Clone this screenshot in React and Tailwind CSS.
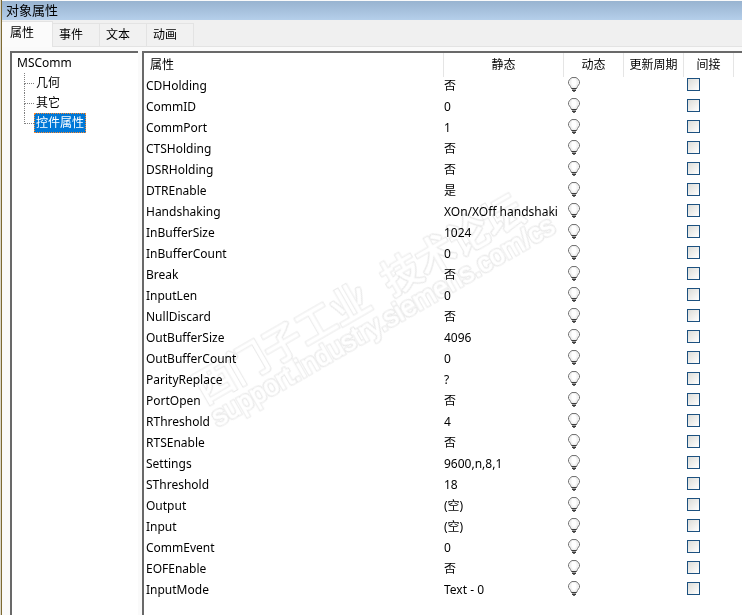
import { useState } from 'react';
import clsx from 'clsx';

const TABS = ['属性', '事件', '文本', '动画'];

const TREE_ITEMS = ['几何', '其它', '控件属性'];

const PROPERTIES = [
  ['CDHolding', '否'],
  ['CommID', '0'],
  ['CommPort', '1'],
  ['CTSHolding', '否'],
  ['DSRHolding', '否'],
  ['DTREnable', '是'],
  ['Handshaking', 'XOn/XOff handshaki'],
  ['InBufferSize', '1024'],
  ['InBufferCount', '0'],
  ['Break', '否'],
  ['InputLen', '0'],
  ['NullDiscard', '否'],
  ['OutBufferSize', '4096'],
  ['OutBufferCount', '0'],
  ['ParityReplace', '?'],
  ['PortOpen', '否'],
  ['RThreshold', '4'],
  ['RTSEnable', '否'],
  ['Settings', '9600,n,8,1'],
  ['SThreshold', '18'],
  ['Output', '(空)'],
  ['Input', '(空)'],
  ['CommEvent', '0'],
  ['EOFEnable', '否'],
  ['InputMode', 'Text - 0'],
];

const BulbIcon = () => (
  <svg className="block" width="12" height="15" viewBox="0 0 12 15" aria-hidden="true">
    <path
      d="M4 .5h4L10.500 2.500 11.500 4.500v2L9.500 9.500 8.500 11.500h-5L2.500 9.500.5 6.500v-2L1.500 2.500Z"
      fill="#f0f0f0"
      stroke="#757575"
      strokeWidth="1"
      strokeLinejoin="round"
    />
    <path d="M4 2h3L8.500 4v3L7 9.500H5L3.500 7V4Z" fill="#fff" />
    <path d="M3.500 11.500h5M4 13.500h4" stroke="#3c3c3c" strokeWidth="1" />
    <path d="M4 12.500h4" stroke="#a0a0a0" strokeWidth="1" />
    <path d="M5 14.500h2" stroke="#666" strokeWidth="1" />
  </svg>
);

const Tabs = ({ active, onChange }) => (
  <div role="tablist" className="flex items-end border-b border-[#e3e3e3] bg-[#f0f0f0] pt-px">
    {TABS.map((tab) => (
      <button
        key={tab}
        type="button"
        role="tab"
        aria-selected={tab === active}
        onClick={() => onChange(tab)}
        className={clsx(
          'shrink-0 border-r border-t border-[#e3e3e3] text-left',
          tab === active ? '-mb-px h-[26px] w-[51px] bg-[#fbfbfb] pb-1 pl-2' : 'h-[23px] w-[47px] bg-[#f1f1f1] pl-[6px]',
        )}
      >
        {tab}
      </button>
    ))}
  </div>
);

const Tree = ({ selected, onSelect }) => (
  <nav className="w-32 shrink-0 border-l-2 border-t-2 border-[#696969] bg-white pl-[5px]">
    <div className="h-5 leading-5">MSComm</div>
    <ul className="pl-[7px]">
      {TREE_ITEMS.map((item, i) => (
        <li key={item} className="flex h-5">
          <div className="flex w-[10px] shrink-0 flex-col">
            <div className="h-[11px] border-b border-l border-dotted border-[#808080]" />
            <div
              className={clsx(
                'flex-1 border-dotted border-[#808080]',
                i < TREE_ITEMS.length - 1 && 'border-l',
              )}
            />
          </div>
          <button
            type="button"
            onClick={() => onSelect(item)}
            className={clsx(
              'h-5 border px-px leading-[18px]',
              item === selected
                ? 'border-dotted border-[#ff8728] bg-[#0078d7] text-white'
                : 'border-transparent',
            )}
          >
            {item}
          </button>
        </li>
      ))}
    </ul>
  </nav>
);

const PropertyTable = () => (
  <table className="w-full table-fixed border-collapse">
    <colgroup>
      <col className="w-[299px]" />
      <col className="w-[120px]" />
      <col className="w-[60px]" />
      <col className="w-[60px]" />
      <col className="w-[50px]" />
      <col />
    </colgroup>
    <thead>
      <tr className="h-6">
        <th scope="col" className="p-0 pl-[6px] text-left font-normal">属性</th>
        <th scope="col" className="border-x border-[#e5e5e5] p-0 pl-px text-center font-normal">静态</th>
        <th scope="col" className="border-x border-[#e5e5e5] p-0 pl-px text-center font-normal">动态</th>
        <th scope="col" className="border-x border-[#e5e5e5] p-0 pl-px text-center font-normal">更新周期</th>
        <th scope="col" className="border-x border-[#e5e5e5] p-0 pl-px text-center font-normal">间接</th>
        <td />
      </tr>
    </thead>
    <tbody>
      {PROPERTIES.map(([name, value]) => (
        <tr key={name} className="h-[21px] align-top leading-[18px]">
          <td className="p-0 pl-[2px]">{name}</td>
          <td className="whitespace-nowrap p-0 pl-px">{value}</td>
          <td className="p-0 pl-[5px]">
            <BulbIcon />
          </td>
          <td />
          <td className="p-0 pl-1 pt-px">
            <input
              type="checkbox"
              aria-label={name}
              className="block size-[13px] appearance-none border border-[#1c5180] bg-linear-to-br from-[#dcdcd7] to-white checked:bg-[#1c5180]"
            />
          </td>
          <td />
        </tr>
      ))}
    </tbody>
  </table>
);

// Hollow lettering: a thin outline is drawn around a white stroke.
const Watermark = () => (
  <svg
    className="pointer-events-none absolute left-[36px] top-[110px] mix-blend-multiply"
    width="400"
    height="290"
    viewBox="0 0 400 290"
    strokeLinejoin="round"
    aria-hidden="true"
  >
    <defs>
      <filter id="outline" x="-5%" y="-20%" width="110%" height="140%">
        <feMorphology in="SourceAlpha" operator="dilate" radius="1" result="wide" />
        <feFlood floodColor="#e9e9e9" />
        <feComposite in2="wide" operator="in" result="edge" />
        <feMerge>
          <feMergeNode in="edge" />
          <feMergeNode in="SourceGraphic" />
        </feMerge>
      </filter>
    </defs>
    <g transform="translate(38 264) rotate(-30)" fill="#fff" stroke="#fff" strokeWidth="1" filter="url(#outline)">
      <text x="0" y="-27" fontSize="39" className="font-['Noto_Sans_CJK_SC',sans-serif]">
        西门子工业
      </text>
      <text x="216" y="-27" fontSize="39" className="font-['Noto_Sans_CJK_SC',sans-serif]">
        技术论坛
      </text>
      <text x="0" y="0" fontSize="27" className="font-['Liberation_Sans',sans-serif]">
        support.industry.siemens.com/cs
      </text>
    </g>
  </svg>
);

export default function App() {
  const [tab, setTab] = useState('属性');
  const [node, setNode] = useState('控件属性');

  return (
    <div className="flex min-h-screen border-l border-[#d8d4c8] bg-[#fafafa] font-['Noto_Sans','Noto_Sans_CJK_SC',sans-serif] text-xs text-black">
      <div className="flex min-w-0 flex-1 flex-col border-l border-[#7d6a32]">
        <h1 className="mt-px h-[19px] bg-linear-to-b from-[#98b3d0] to-[#b5cfea] pl-1 text-[13px] leading-[19px]">
          对象属性
        </h1>
        <Tabs active={tab} onChange={setTab} />
        <div className="flex flex-1 pl-2 pt-1">
          <Tree selected={node} onSelect={setNode} />
          <main className="relative ml-1 min-w-0 flex-1 border-l-2 border-t-2 border-[#696969] bg-white">
            <PropertyTable />
            <Watermark />
          </main>
        </div>
      </div>
    </div>
  );
}
